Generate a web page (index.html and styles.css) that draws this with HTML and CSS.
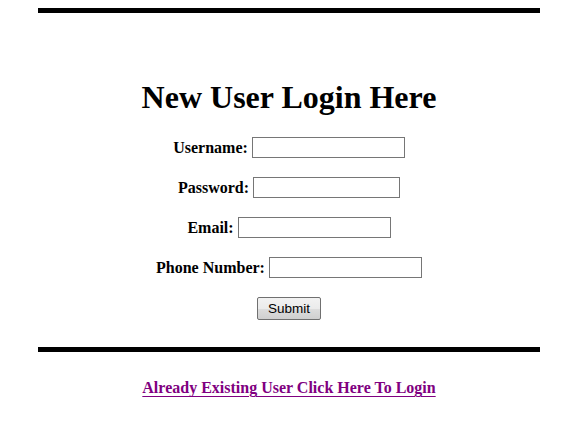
FILE: index.html
```html
<!DOCTYPE html>
<html>
<head>
<meta charset="utf-8">
<title>New User Login</title>
<link rel="stylesheet" href="styles.css">
</head>
<body>
<div class="wrap">
  <div class="rule rule-top"></div>
  <h1 class="title">New User Login Here</h1>
  <form class="form">
    <div class="row"><label class="lbl" for="u">Username:</label><input class="field" id="u" type="text"></div>
    <div class="row"><label class="lbl" for="p">Password:</label><input class="field field-pw" id="p" type="password"></div>
    <div class="row"><label class="lbl" for="e">Email:</label><input class="field" id="e" type="text"></div>
    <div class="row"><label class="lbl" for="ph">Phone Number:</label><input class="field" id="ph" type="text"></div>
    <div class="row row-btn"><button class="btn" type="button">Submit</button></div>
  </form>
  <div class="rule rule-bottom"></div>
  <p class="foot"><a class="link" href="#login">Already Existing User Click Here To Login</a></p>
</div>
</body>
</html>
```

FILE: styles.css
```css
html, body {
  margin: 0;
  padding: 0;
  background: #ffffff;
}

body {
  font-family: "Liberation Serif", "Times New Roman", serif;
  color: #000000;
}

.wrap {
  width: 502px;
  margin-left: 38px;
  display: flex;
  flex-direction: column;
}

.rule {
  height: 5px;
  background: #000000;
}

.rule-top {
  margin-top: 8px;
}

.title {
  margin: 66px 0 0 0;
  font-size: 32px;
  line-height: 36px;
  font-weight: bold;
  text-align: center;
}

.form {
  margin: 22px 0 0 0;
  display: flex;
  flex-direction: column;
  gap: 19px;
}

.row {
  display: flex;
  justify-content: center;
  align-items: center;
  gap: 4px;
  height: 21px;
}

.lbl {
  font-size: 16px;
  font-weight: bold;
  line-height: 18px;
}

.field {
  box-sizing: border-box;
  width: 153px;
  height: 21px;
  margin: 0;
  padding: 1px 2px;
  border: 1px solid #767676;
  background: #ffffff;
  font-family: "Liberation Sans", Arial, sans-serif;
  font-size: 13px;
}

.field-pw {
  width: 147px;
}

.row-btn {
  height: 23px;
}

.btn {
  box-sizing: border-box;
  width: 64px;
  height: 23px;
  margin: 0;
  padding: 0;
  border: 1px solid #707070;
  border-radius: 2px;
  background: linear-gradient(#f2f2f2 0%, #ebebeb 50%, #dddddd 51%, #cfcfcf 100%);
  font-family: "Liberation Sans", Arial, sans-serif;
  font-size: 13.5px;
  color: #000000;
}

.rule-bottom {
  margin-top: 27px;
}

.foot {
  margin: 27px 0 0 0;
  text-align: center;
  font-size: 16px;
  line-height: 18px;
  font-weight: bold;
}

.link {
  color: #800080;
  text-decoration: underline;
  text-underline-offset: 3px;
  text-decoration-thickness: 2px;
}
```
